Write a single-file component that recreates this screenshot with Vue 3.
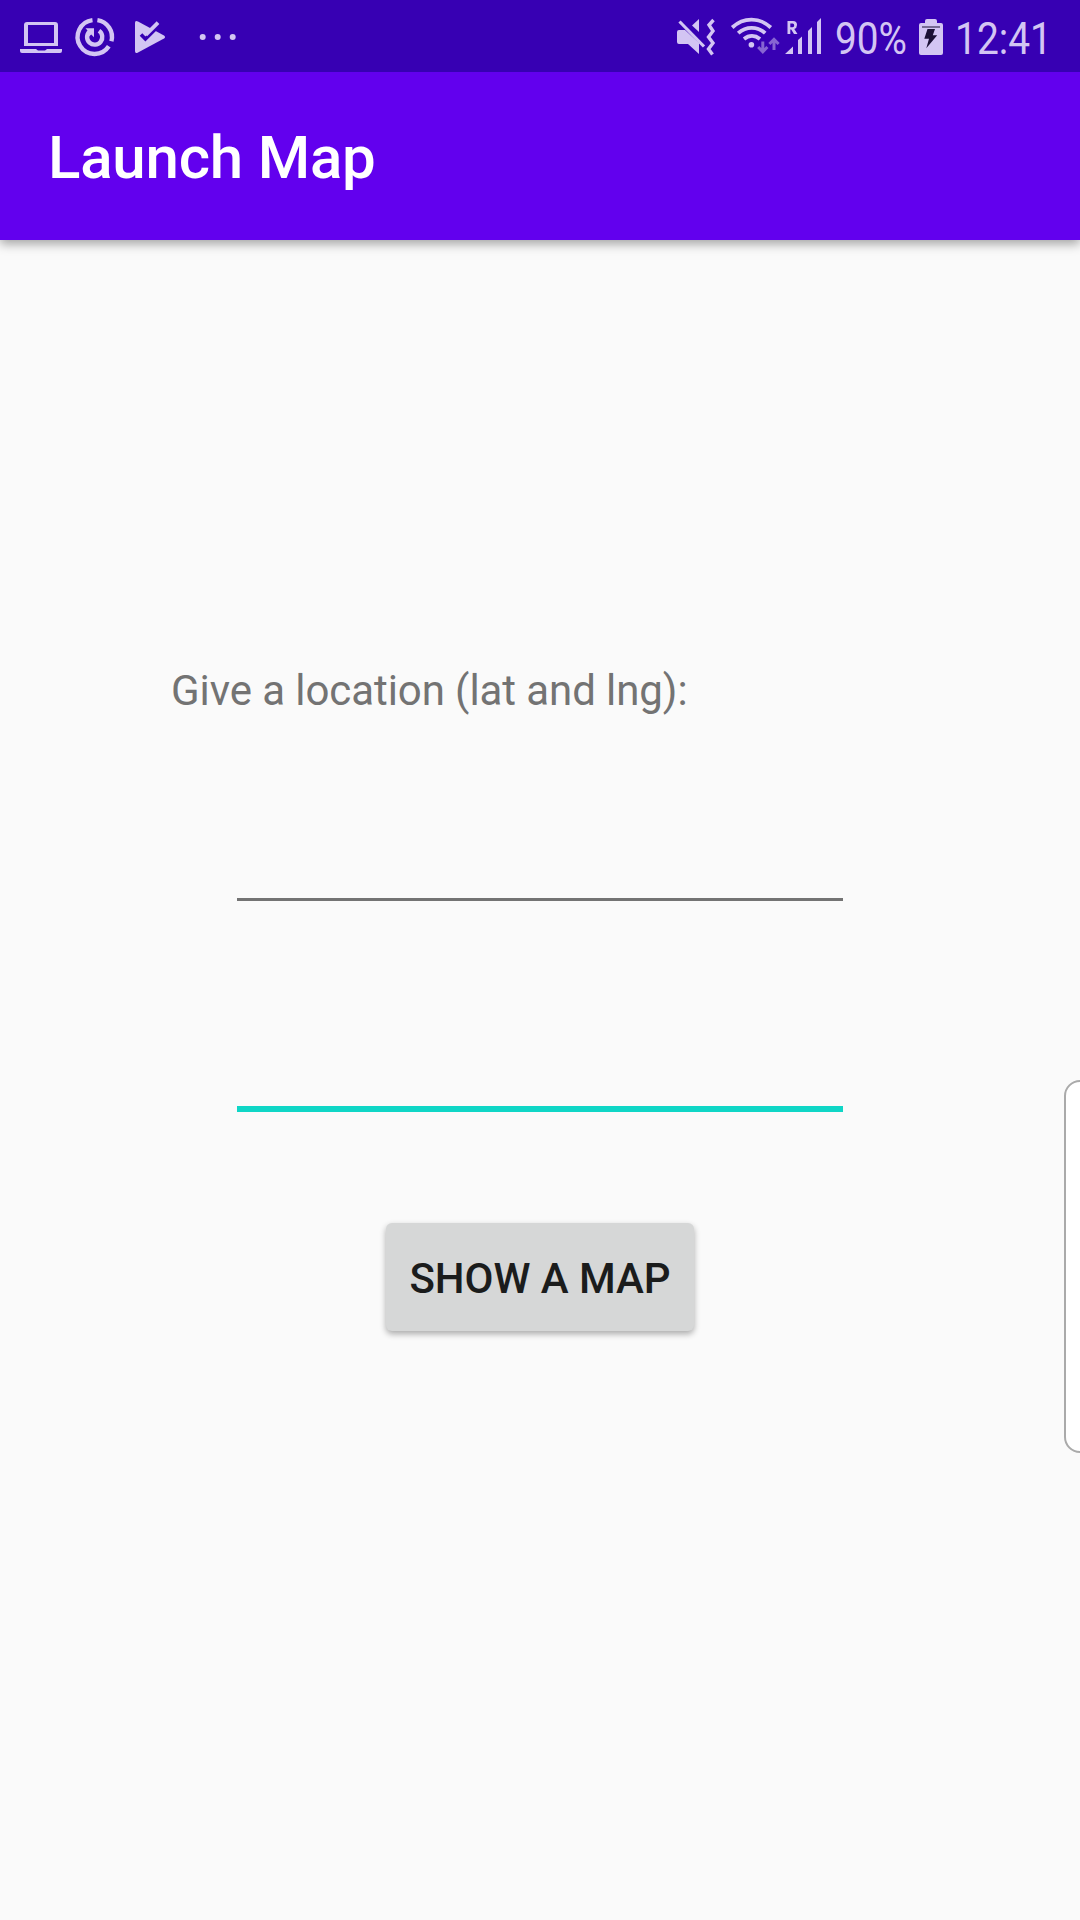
<script setup>
import { ref } from 'vue'

const latitude = ref('')
const longitude = ref('')
</script>

<template>
  <div class="screen">
    <header class="status">
      <div class="group">
        <svg class="laptop" width="42" height="72" viewBox="20 0 42 72">
          <path fill-rule="evenodd" d="M27 22H55Q58 22 58 25V46H24V25Q24 22 27 22ZM28 25V43H54V25Z" />
          <path d="M20 49H36L38 50.5H45L47 49H62V51Q62 53 60 53H22Q20 53 20 51Z" />
        </svg>
        <svg class="sync" width="38" height="72" viewBox="76 0 38 72">
          <path class="line" stroke-width="4.4" d="M92.5 20.1A17 17 0 1 0 108.8 46.3M97.4 20.1A17 17 0 0 1 111.4 41.2" />
          <path class="line" stroke-width="4.4" d="M89.5 31.5A7.6 7.6 0 1 0 99 30.8" />
          <path d="M85.5 28.2H94V37.2L91.2 34.4L88.8 36.8L86 34L88.4 31.4Z" />
        </svg>
        <svg class="play" width="30" height="72" viewBox="135 0 30 72">
          <path d="M135 23Q135 20 138 21.5L164 35.4Q166 37 164 38.6L138 52.5Q135 54 135 51Z" />
          <path class="tick" d="M141 34.5L145.4 39L160 24.5" />
          <path class="line" stroke-width="3.8" d="M145.8 34.8L158 22.6" />
        </svg>
        <svg class="dots" width="38" height="72" viewBox="199 0 38 72">
          <circle cx="202.7" cy="37" r="3" />
          <circle cx="217.7" cy="37" r="3" />
          <circle cx="232.7" cy="37" r="3" />
        </svg>
      </div>
      <div class="group">
        <svg class="mute" width="38" height="72" viewBox="677 0 38 72">
          <path d="M679 30H685L699 43V54L688 44H679Q677 44 677 42V32Q677 30 679 30Z" />
          <path d="M692 25.5L699 19V32Z" />
          <path class="line" stroke-width="3.2" d="M679.5 21.5L704 46.5" />
          <path class="line" stroke-width="3.4" d="M713.5 20L709 25L713 31L708.5 37L713 43L708.5 49L712.5 54.5" />
        </svg>
        <svg class="wifi" width="48" height="72" viewBox="731 0 48 72">
          <path class="line" stroke-width="3.8" d="M732.2 27.5C743.5 17 759.5 17 770.8 27.5M738.2 33.2C746 26 757.5 26 765.2 33.2M744 39C749 35 755 35 760 39" />
          <circle cx="751.4" cy="44.7" r="2.8" />
          <path class="line faint" stroke-width="3" d="M762.8 41.5V51.5M758.2 47L762.8 51.8L767.4 47M774 50V40M769.4 44L774 39.3L778.6 44" />
        </svg>
        <svg class="signal" width="37" height="72" viewBox="785 0 37 72">
          <path fill-rule="evenodd" d="M787.5 21H793Q797 21 797 25Q797 28 794.3 29L797.5 34H794L791.2 29.6H790.3V34H787.5ZM790.3 23.5V27.2H792.6Q794.2 27.2 794.2 25.4Q794.2 23.5 792.6 23.5Z" />
          <path d="M785 54L793 46.5V54ZM798 54V40L802 36.5V54ZM808 54V31L812 27V54ZM817 54V22L821 18V54Z" />
        </svg>
        <svg class="percent" width="76" height="72" viewBox="834 0 76 72">
          <text x="835" y="54" textLength="72" lengthAdjust="spacingAndGlyphs">90%</text>
        </svg>
        <svg class="battery" width="24" height="72" viewBox="919 0 24 72">
          <path d="M925 23V21Q925 19 927 19H935Q937 19 937 21V23H941Q943 23 943 25V53Q943 55 941 55H921Q919 55 919 53V25Q919 23 921 23Z" />
          <path class="charge" d="M922 26.5H940V27.5H922ZM927.5 29H935L932.8 35.3H937.2L926.3 48.3L929 38.8H924.3Z" />
        </svg>
        <svg class="clock" width="100" height="72" viewBox="954 0 100 72">
          <text x="955" y="54" textLength="97" lengthAdjust="spacingAndGlyphs">12:41</text>
        </svg>
      </div>
    </header>

    <div class="appbar"><h1>Launch Map</h1></div>

    <main>
      <label for="latitude">Give a location (lat and lng):</label>
      <input id="latitude" v-model="latitude" class="field" type="text">
      <input v-model="longitude" class="field active" type="text" aria-label="Longitude">
      <button type="button">SHOW A MAP</button>
    </main>
    <aside class="edge"></aside>
  </div>
</template>

<style>
body {
  margin: 0;
  background: #fafafa;
}
</style>

<style scoped>
.screen {
  position: relative;
  display: flex;
  flex-direction: column;
  width: 1080px;
  height: 1920px;
  overflow: hidden;
  background: #fafafa;
  font-family: Roboto, "Liberation Sans", sans-serif;
}
.status {
  display: flex;
  flex: none;
  justify-content: space-between;
  height: 72px;
  padding: 0 26px 0 20px;
  box-sizing: border-box;
  background: #3700b3;
}
.group {
  display: flex;
}
svg {
  display: block;
  flex: none;
  overflow: visible;
  fill: #d3c5f3;
}
.line {
  fill: none;
  stroke: #d3c5f3;
}
.faint {
  stroke: #8765d2;
}
.tick {
  fill: none;
  stroke: #3700b3;
  stroke-width: 3.6px;
}
.charge {
  fill: #1b1035;
}
.sync { margin-left: 14px; }
.play { margin-left: 21px; }
.dots { margin-left: 34px; }
.wifi { margin-left: 16px; }
.signal { margin-left: 6px; }
.percent { margin-left: 12px; }
.battery { margin-left: 9px; }
.clock { margin-left: 11px; }
.status text {
  font-size: 45px;
}
.appbar {
  display: flex;
  flex: none;
  align-items: center;
  height: 168px;
  padding: 4px 0 0 48px;
  box-sizing: border-box;
  background: #6200ee;
  box-shadow: 0 4px 10px rgba(0, 0, 0, 0.35);
  clip-path: inset(0 0 -20px 0);
}
h1 {
  margin: 0;
  color: #fff;
  font-size: 60px;
  font-weight: 500;
  line-height: 70px;
  letter-spacing: -0.2px;
}
main {
  display: flex;
  flex-direction: column;
  align-items: center;
}
label {
  align-self: flex-start;
  margin: 426px 0 0 171px;
  color: #737373;
  font-size: 42px;
  line-height: 50px;
  letter-spacing: -0.08px;
}
.field {
  width: 606px;
  height: 125px;
  margin-top: 60px;
  padding: 0;
  box-sizing: border-box;
  border: 0;
  border-bottom: 3px solid #737373;
  border-radius: 0;
  outline: none;
  background: transparent;
  font: 54px Roboto, sans-serif;
}
.active {
  height: 131px;
  margin-top: 80px;
  border-bottom: 6px solid #0fd6c6;
}
button {
  width: 308px;
  height: 108px;
  margin-top: 111px;
  padding: 4px 0 0;
  border: 0;
  border-radius: 6px;
  background: #d6d7d7;
  box-shadow: 0 3px 6px rgba(0, 0, 0, 0.32);
  color: #1b1c1c;
  font: 500 42px/50px Roboto, sans-serif;
  letter-spacing: -0.05px;
  white-space: nowrap;
}
.edge {
  position: absolute;
  top: 1080px;
  right: -16px;
  width: 32px;
  height: 373px;
  box-sizing: border-box;
  border: 2px solid #aaa;
  border-radius: 17px;
  background: #fff;
}
</style>
